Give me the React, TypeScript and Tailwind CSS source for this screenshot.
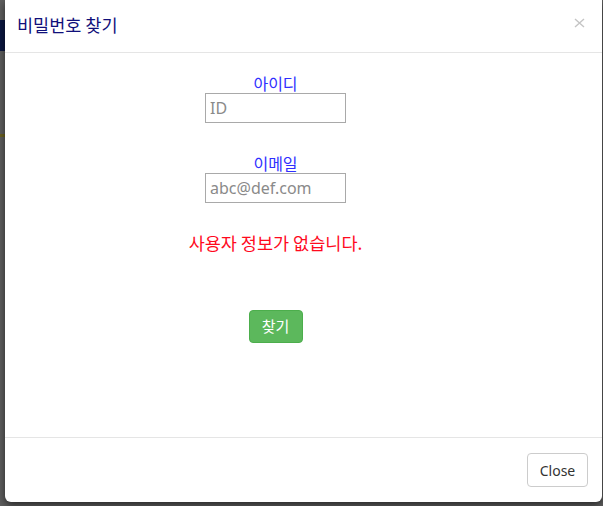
import React from "react";

const kr = "font-['Noto_Sans_CJK_KR','Noto_Sans',sans-serif]";
const latin = "font-['Noto_Sans','Noto_Sans_CJK_KR',sans-serif]";

const Field: React.FC<{ label: string; placeholder: string }> = ({
  label,
  placeholder,
}) => (
  <div className="flex flex-col items-center">
    <p className={`${kr} text-[16px] leading-[20px] text-[#2f2fff]`}>{label}</p>
    <input
      className={`${latin} w-[141px] h-[30px] border border-[#a9a9a9] px-[4px] text-[16px] text-[#333] placeholder:text-[#8a8a8a] outline-none`}
      placeholder={placeholder}
    />
  </div>
);

export default function App() {
  return (
    <div className="relative w-[603px] h-[506px] overflow-hidden bg-[#5f5f5f]">
      {/* page behind the backdrop */}
      <div className="absolute left-0 top-[20px] w-[5px] h-[31px] bg-[#0b1742]" />
      <div className="absolute left-0 top-[134px] w-[5px] h-[3px] bg-[#6d6321]" />

      <div className="relative ml-[5px] w-[597px] h-[502px] bg-white rounded-b-[6px] shadow-[0_3px_9px_rgba(0,0,0,0.6)] flex flex-col">
        <div className="h-[53px] border-b border-[#e5e5e5] flex items-center justify-between pl-[12px] pr-[17px]">
          <h4 className={`${kr} text-[17.5px] leading-[24px] text-[#10107a] mb-[2px]`}>
            비밀번호 찾기
          </h4>
          <button className="mb-[6px]" aria-label="close">
            <svg width="11" height="10" viewBox="0 0 11 10">
              <path d="M1 1 L10 9 M10 1 L1 9" stroke="#c4c4c4" strokeWidth="1.4" />
            </svg>
          </button>
        </div>

        <div className="flex-1">
          <div className="w-[541px] flex flex-col items-center pt-[20px]">
            <Field label="아이디" placeholder="ID" />
            <div className="h-[30px]" />
            <Field label="이메일" placeholder="abc@def.com" />
            <p className={`${kr} mt-[30px] text-[17.5px] leading-[20px] text-[#ff0a1e]`}>
              사용자 정보가 없습니다.
            </p>
            <button
              className={`${kr} mt-[57px] w-[54px] h-[33px] rounded-[4px] border border-[#4cae4c] bg-[#5cb85c] text-white text-[15px]`}
            >
              찾기
            </button>
          </div>
        </div>

        <div className="h-[65px] border-t border-[#e5e5e5] flex items-center justify-end pr-[14px]">
          <button
            className={`${latin} w-[61px] h-[34px] rounded-[4px] border border-[#ccc] bg-white text-[14px] text-[#333]`}
          >
            Close
          </button>
        </div>
      </div>
    </div>
  );
}
